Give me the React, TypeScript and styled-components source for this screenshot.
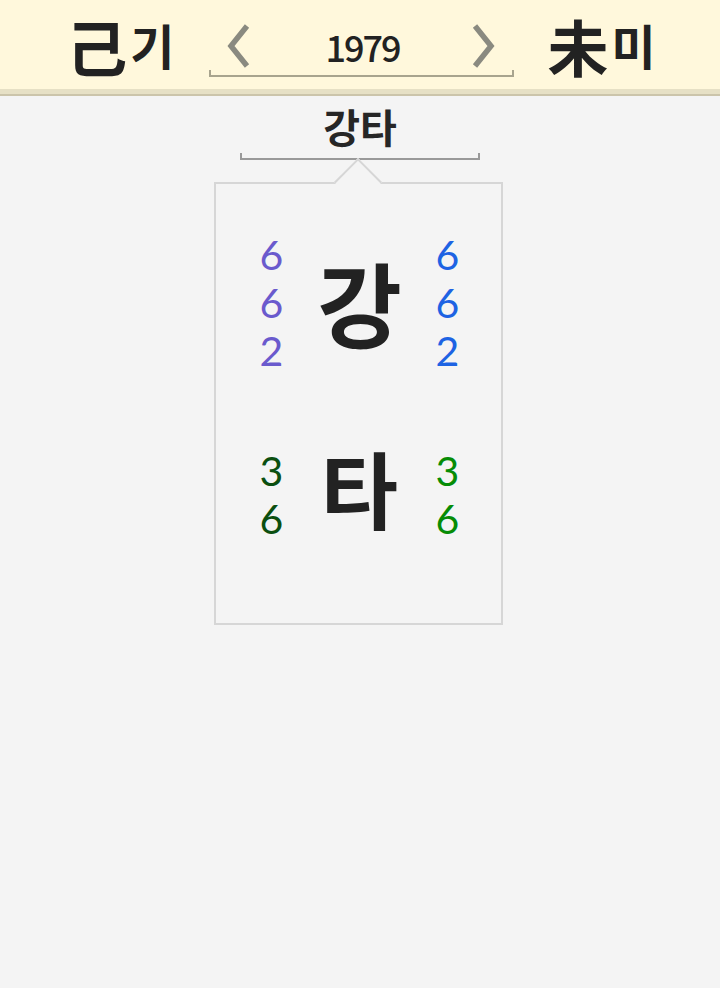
import React from 'react'
import { styled, createGlobalStyle } from 'styled-components'

//Types
type Pillar = {
    char: string,
    left: string[],
    right: string[],
    leftColor: string,
    rightColor: string,
}

const pillars: Pillar[] = [
    { char: '강', left: ['6', '6', '2'], right: ['6', '6', '2'], leftColor: '#6a5acd', rightColor: '#1d63e3' },
    { char: '타', left: ['3', '6'], right: ['3', '6'], leftColor: '#0b4f10', rightColor: '#068c06' },
]

//Styles
const GlobalStyle = createGlobalStyle`
    html, body {
        margin: 0;
        padding: 0;
        background: #f4f4f4;
        font-family: "Noto Sans CJK KR", "Noto Sans", sans-serif;
        color: #222;
    }
`;

const Page = styled.div`
    min-height: 988px;
    display: flex;
    flex-direction: column;
    align-items: center;
`;

const Header = styled.header`
    width: 100%;
    height: 89px;
    background: #fff8dc;
    border-bottom: 5px solid #e6e0c5;
    box-shadow: 0 2px 0 #cbc4aa;
    display: flex;
    align-items: flex-start;
    justify-content: center;
    gap: 34px;
    padding-left: 2px;
    box-sizing: content-box;
`;

const Ganji = styled.div`
    display: flex;
    align-items: flex-start;
    margin-top: 15px;
    font-weight: 700;
    color: #222;
`;

const Hanja = styled.span`
    font-size: 61px;
    line-height: 1;
`;

const Hangul = styled.span`
    font-size: 48px;
    line-height: 1;
    margin-top: 5px;
    margin-left: 3px;
`;

const YearNav = styled.div`
    width: 305px;
    margin-top: 24px;
    display: flex;
    flex-direction: column;
`;

const NavControls = styled.div`
    height: 44px;
    display: flex;
    align-items: center;
    justify-content: space-between;
    padding: 0 18px 0 17px;
`;

const NavButton = styled.button`
    background: none;
    border: none;
    padding: 0;
    width: 26px;
    height: 44px;
    display: flex;
    align-items: center;
    justify-content: center;
    cursor: pointer;
`;

const Year = styled.div`
    font-size: 36px;
    line-height: 1;
    font-weight: 500;
    letter-spacing: -2px;
    margin-left: 4px;
`;

const Bracket = styled.div<{ $width: number, $color: string }>`
    width: ${p => p.$width}px;
    height: 7px;
    margin-top: 2px;
    box-sizing: border-box;
    border: 2px solid ${p => p.$color};
    border-top: none;
`;

const TitleBlock = styled.div`
    display: flex;
    flex-direction: column;
    align-items: center;
    margin-top: 7px;
`;

const Title = styled.h2`
    margin: 0;
    font-size: 40px;
    line-height: 50px;
    font-weight: 700;
    color: #262626;
`;

const Card = styled.div`
    position: relative;
    margin: 22px 3px 0 0;
    width: 289px;
    height: 443px;
    box-sizing: border-box;
    border: 2px solid #d6d6d6;
    display: flex;
    flex-direction: column;
    gap: 72px;
    padding-top: 47px;

    &::before {
        content: '';
        position: absolute;
        top: -19px;
        left: 50%;
        width: 32px;
        height: 32px;
        margin-left: -18px;
        background: #f4f4f4;
        border-top: 2px solid #d6d6d6;
        border-left: 2px solid #d6d6d6;
        transform: rotate(45deg);
    }
`;

const Row = styled.div`
    display: grid;
    grid-template-columns: 88px 88px 88px;
    justify-content: center;
    align-items: center;
    padding-left: 2px;
`;

const Digits = styled.div<{ $color: string }>`
    display: flex;
    flex-direction: column;
    align-items: center;
    color: ${p => p.$color};
    font-family: Lato, "Noto Sans", sans-serif;
    font-size: 41px;
    line-height: 48px;
    font-weight: 400;
`;

const BigChar = styled.div<{ $size: number, $lift: number }>`
    font-size: ${p => p.$size}px;
    line-height: 1;
    font-weight: 700;
    text-align: center;
    color: #222;
    transform: translateY(${p => p.$lift}px);
`;

const Chevron = ({ dir }: { dir: 'left' | 'right' }) => (
    <svg width="26" height="44" viewBox="0 0 26 44">
        <polyline
            points={dir === 'left' ? '21,2 5,22 21,42' : '5,2 21,22 5,42'}
            fill="none"
            stroke="#8a8a80"
            strokeWidth="5.5"
        />
    </svg>
)

const App = () => {
    return (
        <>
            <GlobalStyle />
            <Page>
                <Header>
                    <Ganji>
                        <Hanja>己</Hanja>
                        <Hangul>기</Hangul>
                    </Ganji>
                    <YearNav>
                        <NavControls>
                            <NavButton aria-label="prev"><Chevron dir="left" /></NavButton>
                            <Year>1979</Year>
                            <NavButton aria-label="next"><Chevron dir="right" /></NavButton>
                        </NavControls>
                        <Bracket $width={305} $color="#a8a48e" />
                    </YearNav>
                    <Ganji>
                        <Hanja>未</Hanja>
                        <Hangul>미</Hangul>
                    </Ganji>
                </Header>
                <TitleBlock>
                    <Title>강타</Title>
                    <Bracket $width={240} $color="#999" />
                </TitleBlock>
                <Card>
                    {pillars.map((p, i) => (
                        <Row key={p.char}>
                            <Digits $color={p.leftColor}>
                                {p.left.map((d, j) => <span key={j}>{d}</span>)}
                            </Digits>
                            <BigChar $size={i === 0 ? 92 : 84} $lift={i === 0 ? -2 : -8}>{p.char}</BigChar>
                            <Digits $color={p.rightColor}>
                                {p.right.map((d, j) => <span key={j}>{d}</span>)}
                            </Digits>
                        </Row>
                    ))}
                </Card>
            </Page>
        </>
    )
}

export default App;
